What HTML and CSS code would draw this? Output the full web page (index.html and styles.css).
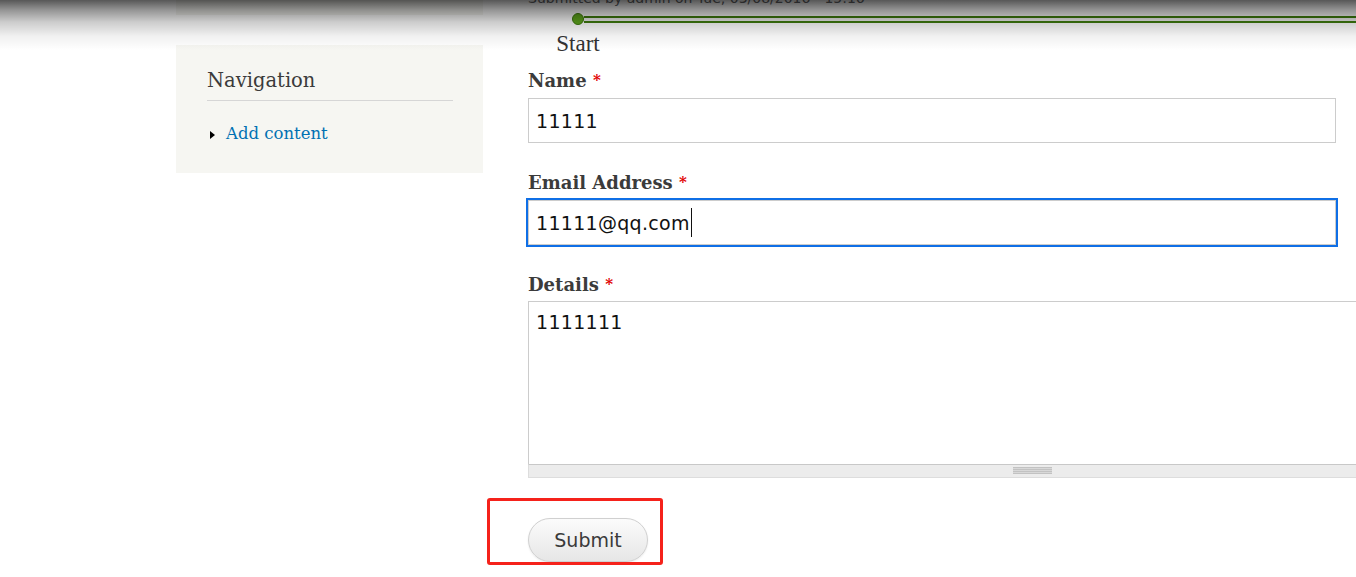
FILE: index.html
```html
<!DOCTYPE html>
<html lang="en">
<head>
<meta charset="utf-8">
<title>Webform</title>
<link rel="stylesheet" href="styles.css">
</head>
<body>
<div class="page">
  <aside class="sidebar">
    <div class="block block--prev"></div>
    <div class="block">
      <h2 class="block-title">Navigation</h2>
      <ul class="menu">
        <li class="menu-item"><a class="menu-link" href="#">Add content</a></li>
      </ul>
    </div>
  </aside>
  <main class="content">
    <p class="submitted">Submitted by admin on Tue, 03/08/2016 - 15:16</p>
    <div class="progress">
      <div class="progress-track">
        <span class="progress-dot"></span>
        <span class="progress-line"></span>
      </div>
      <div class="progress-label">Start</div>
    </div>
    <form class="webform">
      <div class="form-item">
        <label class="form-label" for="name">Name <span class="required">*</span></label>
        <input class="form-text" id="name" type="text" value="11111">
      </div>
      <div class="form-item">
        <label class="form-label" for="email">Email Address <span class="required">*</span></label>
        <div class="form-text form-text--focused"><span>11111@qq.com</span><span class="caret"></span></div>
      </div>
      <div class="form-item form-item--textarea">
        <label class="form-label form-label--tight" for="details">Details <span class="required">*</span></label>
        <textarea class="form-textarea" id="details">1111111</textarea>
        <div class="grippie"></div>
      </div>
      <div class="form-actions">
        <button class="button" type="button">Submit</button>
      </div>
    </form>
  </main>
</div>
<div class="shade"></div>
<div class="annotation"></div>
</body>
</html>
```
FILE: styles.css
```css
html, body {
  margin: 0;
  padding: 0;
  background: #fff;
}
body {
  width: 1356px;
  height: 577px;
  overflow: hidden;
  position: relative;
  font-family: "DejaVu Serif", Georgia, serif;
  color: #3b3b3b;
}
.page {
  display: flex;
  align-items: flex-start;
  gap: 45px;
  margin-top: -40px;
  padding-left: 176px;
}
.sidebar {
  width: 307px;
  flex: 0 0 307px;
  display: flex;
  flex-direction: column;
  gap: 30px;
}
.block {
  background: #f6f6f2;
  padding: 23px 30px 28px 31px;
}
.block--prev {
  height: 55px;
  padding: 0;
}
.block-title {
  margin: 0;
  font-size: 19.5px;
  font-weight: normal;
  line-height: 25px;
  padding-bottom: 7px;
  border-bottom: 1px solid #d6d6d6;
  color: #3b3b3b;
}
.menu {
  list-style: none;
  margin: 22px 0 0;
  padding: 0;
}
.menu-item {
  line-height: 22px;
  font-size: 16.5px;
}
.menu-item::before {
  content: "";
  display: inline-block;
  width: 0;
  height: 0;
  border-left: 5px solid #000;
  border-top: 4.5px solid transparent;
  border-bottom: 4.5px solid transparent;
  margin-left: 3px;
  margin-right: 11px;
  vertical-align: 0;
}
.menu-link {
  color: #0071b3;
  text-decoration: none;
}
.content {
  flex: 0 0 1009px;
  width: 1009px;
}
.submitted {
  margin: 28px 0 5px;
  font-family: "DejaVu Sans", sans-serif;
  font-size: 14px;
  line-height: 20px;
  color: #68696b;
}
.progress-track {
  display: flex;
  align-items: center;
  height: 12px;
  padding-left: 44px;
}
.progress-dot {
  flex: 0 0 12px;
  width: 12px;
  height: 12px;
  box-sizing: border-box;
  border-radius: 50%;
  background: #5fa71c;
  border: 1px solid #3d7a0c;
}
.progress-line {
  flex: 1 1 auto;
  height: 7px;
  box-sizing: border-box;
  border-top: 2px solid #3f7d0e;
  border-bottom: 2px solid #3f7d0e;
  background: #f2f2f2;
}
.progress-label {
  width: 60px;
  margin: 7px 0 0 20px;
  text-align: center;
  font-family: "Liberation Serif", "Times New Roman", serif;
  font-size: 23px;
  line-height: 24px;
  color: #333;
}
.webform {
  margin-top: 14px;
}
.form-item {
  margin-bottom: 29px;
}
.form-item--textarea {
  margin-bottom: 40px;
}
.form-label {
  display: block;
  font-family: "DejaVu Serif", Georgia, serif;
  font-weight: bold;
  font-size: 18px;
  line-height: 21px;
  margin-bottom: 7px;
  color: #3b3b3b;
}
.form-label--tight {
  margin-bottom: 6px;
}
.required {
  color: #e10000;
  font-size: 15px;
  vertical-align: 2px;
}
.form-text {
  display: flex;
  align-items: center;
  width: 808px;
  height: 45px;
  box-sizing: border-box;
  margin: 0;
  border: 1px solid #cccccc;
  padding: 0 7px;
  font-family: "DejaVu Sans", sans-serif;
  font-size: 19px;
  letter-spacing: 0.3px;
  color: #111;
  background: #fff;
  outline: none;
}
.form-text--focused {
  outline: 2px solid #0f6fe6;
  outline-offset: 0;
}
.caret {
  display: inline-block;
  width: 1px;
  height: 29px;
  background: #111;
  margin-left: 1px;
}
.form-textarea {
  display: block;
  width: 100%;
  height: 163px;
  box-sizing: border-box;
  margin: 0;
  border: 1px solid #cccccc;
  border-bottom: 0;
  padding: 8px 7px;
  font-family: "DejaVu Sans", sans-serif;
  font-size: 19px;
  letter-spacing: 0.3px;
  line-height: 24px;
  color: #111;
  resize: none;
  outline: none;
}
.grippie {
  height: 14px;
  box-sizing: border-box;
  border: 1px solid #dddddd;
  border-top-color: #c8c8c8;
  background: #ececec;
  display: flex;
  justify-content: center;
  padding-top: 2px;
}
.grippie::before {
  content: "";
  width: 39px;
  height: 7px;
  background: repeating-linear-gradient(#c2c2c2 0 1px, #d8d8d8 1px 2px);
}
.button {
  width: 120px;
  height: 44px;
  border-radius: 22px;
  border: 1px solid #d0d0d0;
  background: linear-gradient(#fbfbfb, #e6e6e6);
  box-shadow: 0 1px 2px rgba(0, 0, 0, 0.08);
  font-family: "DejaVu Sans", sans-serif;
  font-size: 19px;
  color: #3a3a3a;
  padding: 0;
}
.shade {
  position: absolute;
  top: 0;
  left: 0;
  right: 0;
  height: 50px;
  pointer-events: none;
  background: linear-gradient(rgba(0, 0, 0, 0.66) 0px, rgba(0, 0, 0, 0.42) 10px, rgba(0, 0, 0, 0.2) 22px, rgba(0, 0, 0, 0.06) 36px, rgba(0, 0, 0, 0) 50px);
}
.annotation {
  position: absolute;
  left: 487px;
  top: 498px;
  width: 176px;
  height: 67px;
  box-sizing: border-box;
  border: 3px solid #f5221b;
  border-radius: 3px;
  pointer-events: none;
}
```
